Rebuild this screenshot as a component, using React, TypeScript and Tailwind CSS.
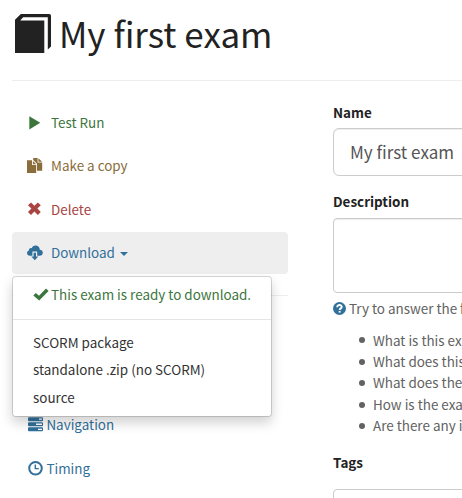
import type { ReactNode } from 'react';

function Icon({ children, className = '', box = '0 0 16 16' }: { children: ReactNode; className?: string; box?: string }) {
  return (
    <svg viewBox={box} fill="currentColor" className={`shrink-0 ${className}`} aria-hidden="true">
      {children}
    </svg>
  );
}

const PlayIcon = () => (
  <Icon className="h-4 w-4"><path d="M2.3 1.2 13.3 7.8 2.3 14.5Z" /></Icon>
);
const CopyIcon = () => (
  <Icon className="h-4 w-4">
    <path d="M0 2.3h5V7h4.2v8H0Z" />
    <path d="M5.9 2.9 9.2 6.2H5.9Z" />
    <path d="M6.2 0h4.4v4.6h4.6v8.1H10V5.7L6.2 2Z" />
    <path d="M11.4.2 15.2 3.8h-3.8Z" />
  </Icon>
);
const RemoveIcon = () => (
  <Icon className="h-4 w-4">
    <path d="M4 1.4 7.4 4.8 10.8 1.4 13.8 4.3 10.4 7.6l3.4 3.4-3 3L7.4 10.6 4 14 1 11 4.4 7.6 1 4.3Z" />
  </Icon>
);
const CloudIcon = () => (
  <Icon className="h-4 w-4">
    <path d="M3 10.7C1.2 10.7 0 9.5 0 8c0-1.2.8-2.3 2-2.6C1.8 3.7 3.3 2.7 4.6 3.3 5.2 1.6 6.7.4 8.5.4c2.5 0 4.3 1.9 4.3 4.3 1.7 0 3 1.3 3 3s-1.3 3-3 3h-2.6V6.5H5.4v4.2Z" />
    <path d="M6.6 7.8h2.4v3.6h2.3L7.8 15.3 4.3 11.4h2.3Z" />
  </Icon>
);
const CheckIcon = () => (
  <Icon className="h-4 w-4"><path d="M.3 8.6 2.8 6 6 8.8 13 1.6 15.6 4.1 6.2 13.6Z" /></Icon>
);
const ServerIcon = () => (
  <Icon className="h-4 w-4">
    <path fillRule="evenodd" d="M1 .2h13a1 1 0 0 1 1 1v2a1 1 0 0 1-1 1H1a1 1 0 0 1-1-1v-2a1 1 0 0 1 1-1Zm10 1.4v1.2h3V1.6ZM1 5.2h13a1 1 0 0 1 1 1v2a1 1 0 0 1-1 1H1a1 1 0 0 1-1-1v-2a1 1 0 0 1 1-1Zm7 1.4v1.3h6V6.6ZM1 10.3h13a1 1 0 0 1 1 1v2a1 1 0 0 1-1 1H1a1 1 0 0 1-1-1v-2a1 1 0 0 1 1-1Zm9 1.4v1.3h4v-1.3Z" />
  </Icon>
);
const ClockIcon = () => (
  <Icon className="h-4 w-4">
    <path fillRule="evenodd" d="M7.5 0a7.3 7.3 0 1 1 0 14.6 7.3 7.3 0 0 1 0-14.6Zm0 2a5.3 5.3 0 1 0 0 10.6A5.3 5.3 0 0 0 7.5 2Z" />
    <path d="M6.6 3.5H8v3.4h2.8v1.3H6.6Z" />
  </Icon>
);
const HelpIcon = () => (
  <Icon className="h-[13px] w-[13px]" box="0 0 13 13">
    <circle cx="6.5" cy="6.5" r="6.5" />
    <path d="M4.2 5.2c0-3.1 5-2.8 4.5 0C8.5 6.5 6.7 6.3 6.7 8" fill="none" stroke="white" strokeWidth="1.9" />
    <path d="M5.7 8.9h1.9v1.7H5.7Z" fill="white" />
  </Icon>
);
const BookIcon = () => (
  <Icon className="h-[39px] w-[37px]" box="0 0 37 39">
    <path d="M0 5.8 5.8 0H34.2a1.8 1.8 0 0 1 1.8 1.8V32.5L32.8 35.5V3.2H8.2L5.2 6.6H29.3V39H0Z" />
  </Icon>
);

function NavLink({ icon, children, className }: { icon: ReactNode; children: ReactNode; className: string }) {
  return (
    <a className={`flex h-[41.4px] items-center rounded ${className}`}>
      {icon}
      {children}
    </a>
  );
}

const questions = [
  'What is this exam for?',
  'What does this exam assess?',
  'What does the student need to know?',
  'How is the exam structured?',
  'Are there any instructions?',
];

export default function App() {
  return (
    <div className="h-[498px] w-[462px] overflow-hidden bg-white pl-3 font-['Noto_Sans_CJK_SC','Noto_Sans',sans-serif] text-[13.45px] leading-[21.4px] whitespace-nowrap text-[#222]">
      <header className="flex h-[81px] border-b border-[#eee] pt-[14px] pl-[3px]">
        <BookIcon />
        <h1 className="ml-[7px] h-[42px] text-[34.95px] leading-[38px]">My first exam</h1>
      </header>
      <div className="flex">
        <aside className="w-[276px] shrink-0 pt-[21px]">
          <nav className="relative flex flex-col gap-[2px]">
            <NavLink icon={<PlayIcon />} className="gap-2 pl-[15px] text-[#3c763d]">Test Run</NavLink>
            <NavLink icon={<CopyIcon />} className="gap-2 pl-[15px] text-[#8a6d3b]">Make a copy</NavLink>
            <NavLink icon={<RemoveIcon />} className="gap-2 pl-[15px] text-[#a94442]">Delete</NavLink>
            <NavLink icon={<CloudIcon />} className="gap-2 bg-[#eee] pl-[15px] text-[#31709b]">
              Download
              <span className="-ml-[3px] mt-[3px] border-x-4 border-t-4 border-x-transparent border-t-current" />
            </NavLink>
            <div className="absolute top-[174px] left-0 h-[141px] w-[260px] rounded border border-black/15 bg-white bg-clip-padding pt-[7px] shadow-[0_6px_12px_rgba(0,0,0,0.175)]">
              <div className="flex items-center gap-[2px] pl-5 text-[#3c763d]">
                <CheckIcon />
                This exam is ready to download.
              </div>
              <div className="mt-[14px] mb-[8.6px] h-px bg-[#e5e5e5]" />
              <ul className="pl-5 text-[#333]">
                <li className="py-[3px]">SCORM package</li>
                <li className="py-[3px]">standalone .zip (no SCORM)</li>
                <li className="py-[3px]">source</li>
              </ul>
            </div>
          </nav>
          <hr className="mt-[21px] border-[#eee]" />
          <nav className="flex flex-col gap-[2.5px] pt-[108.6px]">
            <NavLink icon={<ServerIcon />} className="gap-[2.4px] pl-4 text-[#31709b]">Navigation</NavLink>
            <NavLink icon={<ClockIcon />} className="gap-[2.4px] pl-4 text-[#31709b]">Timing</NavLink>
          </nav>
        </aside>
        <main className="ml-[45px] w-[300px] shrink-0 pt-[21px]">
          <div className="h-[26px] font-bold">Name</div>
          <div className="h-[48px] rounded-md border border-[#ccc] pl-4 text-[17.05px] leading-[46px] text-[#555] shadow-[inset_0_1px_1px_rgba(0,0,0,0.075)]">My first exam</div>
          <div className="mt-[15px] h-[27px] font-bold">Description</div>
          <div className="h-[75px] rounded border border-[#ccc] shadow-[inset_0_1px_1px_rgba(0,0,0,0.075)]" />
          <div className="mt-[5px] flex items-center gap-[3px] text-[#626262]">
            <span className="text-[#31709b]"><HelpIcon /></span>
            Try to answer the following questions:
          </div>
          <ul className="mt-[10.2px] pl-[26px] text-[#626262]">
            {questions.map((q) => (
              <li key={q} className="flex items-center gap-[8px]">
                <span className="h-[6px] w-[6px] rounded-full bg-current" />
                {q}
              </li>
            ))}
          </ul>
          <div className="mt-[15.8px] h-[37px] font-bold">Tags</div>
          <div className="h-[48px] rounded border border-[#ccc]" />
        </main>
      </div>
    </div>
  );
}
